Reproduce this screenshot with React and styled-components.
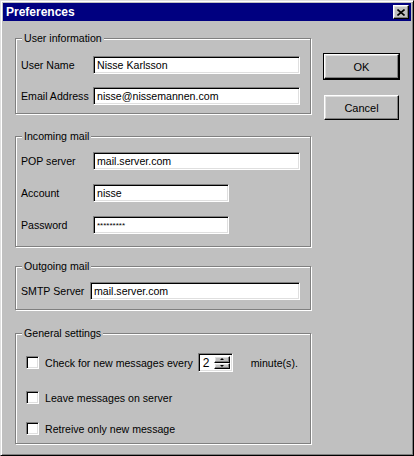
import React from "react";
import styled, { createGlobalStyle } from "styled-components";

const GlobalStyle = createGlobalStyle`
  html, body {
    margin: 0;
    padding: 0;
    background: #c0c0c0;
  }
  body {
    font-family: "Liberation Sans", Arial, sans-serif;
    font-size: 10.6px;
    color: #000;
  }
`;

const Window = styled.div`
  width: 414px;
  height: 456px;
  box-sizing: border-box;
  background: #c0c0c0;
  border: 1px solid;
  border-color: #dfdfdf #000 #000 #dfdfdf;
  box-shadow: inset 1px 1px #fff, inset -1px -1px #808080;
  padding: 2px;
  display: flex;
  flex-direction: column;
`;

const TitleBar = styled.div`
  height: 18px;
  flex-shrink: 0;
  background: #000080;
  color: #fff;
  font-weight: bold;
  font-size: 12px;
  display: flex;
  align-items: center;
  justify-content: space-between;
  padding: 0 2px 0 3px;
`;

const raised = `
  background: #c0c0c0;
  border: 1px solid;
  border-color: #fff #000 #000 #fff;
  box-shadow: inset -1px -1px #808080, inset 1px 1px #dfdfdf;
`;

const sunken = `
  background: #fff;
  border: 1px solid;
  border-color: #808080 #fff #fff #808080;
  box-shadow: inset 1px 1px #000, inset -1px -1px #dfdfdf;
`;

const CloseButton = styled.div`
  ${raised}
  box-sizing: border-box;
  width: 16px;
  height: 14px;
  display: flex;
  align-items: center;
  justify-content: center;
`;

const Body = styled.div`
  flex: 1;
  display: flex;
  gap: 13px;
  padding: 11px 0 0 12px;
`;

const LeftColumn = styled.div`
  width: 296px;
  display: flex;
  flex-direction: column;
`;

const RightColumn = styled.div`
  display: flex;
  flex-direction: column;
  gap: 16px;
  padding-top: 22px;
`;

const Group = styled.fieldset`
  margin: ${p => p.$mt || 0}px 0 0 0;
  padding: 0;
  min-width: 0;
  border: 1px solid #808080;
  box-shadow: inset 1px 1px #fff, 1px 1px #fff;
`;

const Legend = styled.legend`
  margin-left: 6px;
  padding: 0 2px;
  line-height: 13px;
  background: #c0c0c0;
`;

const GroupBody = styled.div`
  display: flex;
  flex-direction: column;
  gap: ${p => p.$gap || 0}px;
  padding: ${p => p.$top}px 10px ${p => p.$bottom}px ${p => p.$left || 5}px;
`;

const FieldRow = styled.div`
  display: grid;
  grid-template-columns: ${p => p.$label}px auto;
  align-items: center;
`;

const Label = styled.span`
  white-space: nowrap;
`;

const TextInput = styled.input`
  ${sunken}
  box-sizing: border-box;
  width: ${p => p.$w}px;
  height: 18px;
  margin: 0;
  padding: 0 1px 0 3px;
  font-family: "Liberation Sans", Arial, sans-serif;
  font-size: ${p => (p.$secret ? 8 : 10.6)}px;
  color: #000;
  outline: none;
`;

const CheckRow = styled.div`
  display: flex;
  align-items: center;
  height: 19px;
  margin-top: ${p => p.$mt || 0}px;
`;

const CheckBox = styled.span`
  ${sunken}
  box-sizing: border-box;
  width: 13px;
  height: 13px;
  margin-right: 6px;
  flex-shrink: 0;
`;

const Spin = styled.div`
  ${sunken}
  box-sizing: border-box;
  width: 35px;
  height: 19px;
  margin: 0 18px 0 5px;
  display: flex;
  padding: 2px;
`;

const SpinValue = styled.span`
  flex: 1;
  line-height: 15px;
  padding-left: 2px;
  font-size: 12px;
`;

const SpinButtons = styled.div`
  width: 16px;
  display: flex;
  flex-direction: column;
`;

const SpinButton = styled.div`
  ${raised}
  box-sizing: border-box;
  flex: 1;
  display: flex;
  align-items: center;
  justify-content: center;
`;

const Arrow = styled.span`
  width: 0;
  height: 0;
  border-left: 2px solid transparent;
  border-right: 2px solid transparent;
  ${p =>
    p.$down
      ? "border-top: 2px solid #000;"
      : "border-bottom: 2px solid #000;"}
`;

const Button = styled.div`
  ${raised}
  box-sizing: border-box;
  width: 75px;
  height: 25px;
  display: flex;
  align-items: center;
  justify-content: center;
  font-size: 11px;
  ${p => p.$default && "outline: 1px solid #000;"}
`;

const Field = ({ label, labelWidth, value, width, secret }) => (
  <FieldRow $label={labelWidth}>
    <Label>{label}</Label>
    <TextInput readOnly defaultValue={value} $w={width} $secret={secret} />
  </FieldRow>
);

export default function App() {
  return (
    <>
      <GlobalStyle />
      <Window>
        <TitleBar>
          <span>Preferences</span>
          <CloseButton>
            <svg width="8" height="7" viewBox="0 0 8 7">
              <path d="M0.5 0.5 L7.5 6.5 M7.5 0.5 L0.5 6.5" stroke="#000" strokeWidth="1.6" />
            </svg>
          </CloseButton>
        </TitleBar>
        <Body>
          <LeftColumn>
            {/* User information */}
            <Group>
              <Legend>User information</Legend>
              <GroupBody $top={11} $bottom={8} $gap={13}>
                <Field label="User Name" labelWidth={72} value="Nisse Karlsson" width={207} />
                <Field label="Email Address" labelWidth={72} value="nisse@nissemannen.com" width={207} />
              </GroupBody>
            </Group>
            {/* Incoming mail */}
            <Group $mt={16}>
              <Legend>Incoming mail</Legend>
              <GroupBody $top={9} $bottom={12} $gap={14}>
                <Field label="POP server" labelWidth={72} value="mail.server.com" width={207} />
                <Field label="Account" labelWidth={72} value="nisse" width={136} />
                <Field label="Password" labelWidth={72} value="*********" width={136} secret />
              </GroupBody>
            </Group>
            {/* Outgoing mail */}
            <Group $mt={13}>
              <Legend>Outgoing mail</Legend>
              <GroupBody $top={9} $bottom={9}>
                <Field label="SMTP Server" labelWidth={69} value="mail.server.com" width={210} />
              </GroupBody>
            </Group>
            {/* General settings */}
            <Group $mt={17}>
              <Legend>General settings</Legend>
              <GroupBody $top={13} $bottom={5} $left={10}>
                <CheckRow>
                  <CheckBox />
                  <Label>Check for new messages every</Label>
                  <Spin>
                    <SpinValue>2</SpinValue>
                    <SpinButtons>
                      <SpinButton>
                        <Arrow />
                      </SpinButton>
                      <SpinButton>
                        <Arrow $down />
                      </SpinButton>
                    </SpinButtons>
                  </Spin>
                  <Label>minute(s).</Label>
                </CheckRow>
                <CheckRow $mt={16}>
                  <CheckBox />
                  <Label>Leave messages on server</Label>
                </CheckRow>
                <CheckRow $mt={12}>
                  <CheckBox />
                  <Label>Retreive only new message</Label>
                </CheckRow>
              </GroupBody>
            </Group>
          </LeftColumn>
          <RightColumn>
            <Button $default>OK</Button>
            <Button>Cancel</Button>
          </RightColumn>
        </Body>
      </Window>
    </>
  );
}
